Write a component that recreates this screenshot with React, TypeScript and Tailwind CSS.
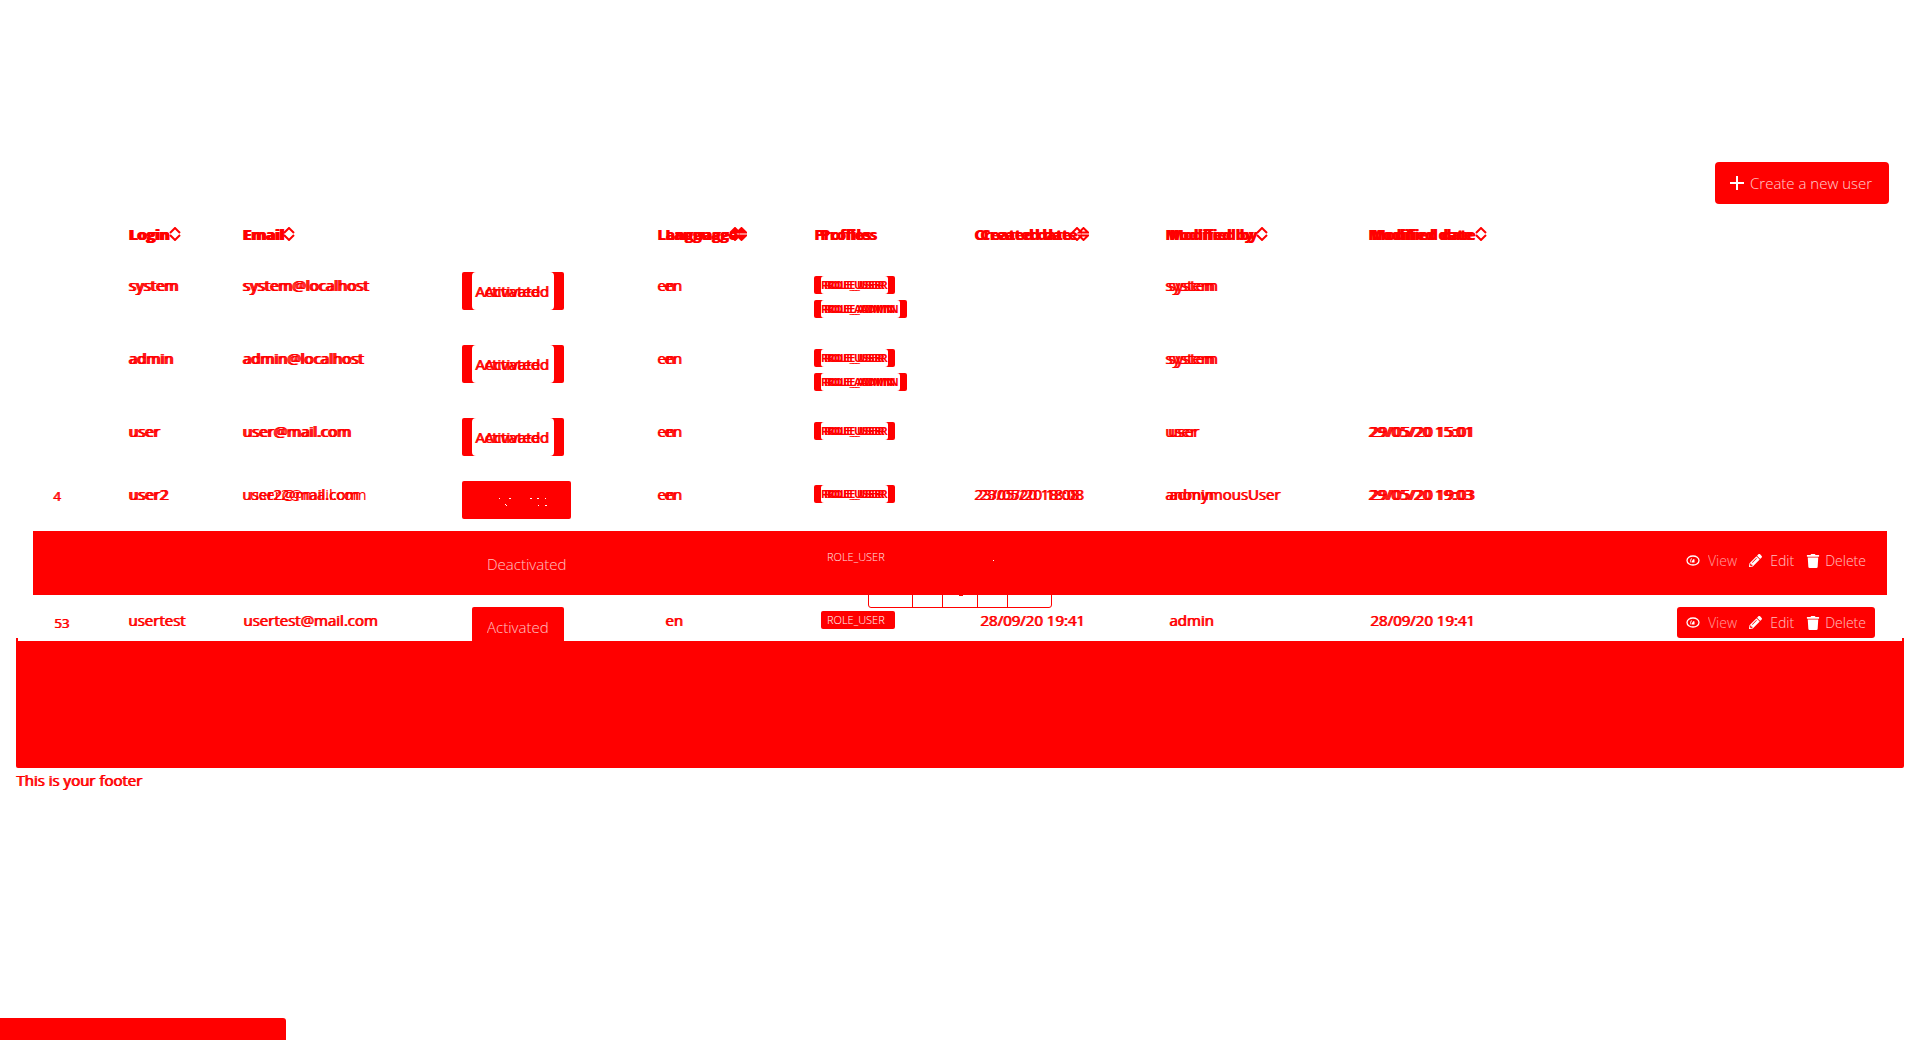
import React from "react";
import { FaPencilAlt, FaTrash } from "react-icons/fa";

type Row = {
  id?: string;
  login: string;
  email: string;
  status: "changed" | "solid";
  roles: string[];
  created?: string;
  by: [string, string];
  modified?: string;
  height: string;
};

const rows: Row[] = [
  { login: "system", email: "system@localhost", status: "changed", roles: ["ROLE_USER", "ROLE_ADMIN"], by: ["system", "system"], height: "h-[73px]" },
  { login: "admin", email: "admin@localhost", status: "changed", roles: ["ROLE_USER", "ROLE_ADMIN"], by: ["system", "system"], height: "h-[73px]" },
  { login: "user", email: "user@mail.com", status: "changed", roles: ["ROLE_USER"], by: ["user", "user"], modified: "29/05/20 15:01", height: "h-[63px]" },
  { id: "4", login: "user2", email: "user2@mail.com", status: "solid", roles: ["ROLE_USER"], created: "23/05/20 18:08", by: ["anonymousUser", "admin"], modified: "29/05/20 19:03", height: "h-[62px]" },
];

const columns = ["w-[83px]", "w-[114px]", "w-[220px]", "w-[195px]", "w-[157px]", "w-[160px]", "w-[191px]", "w-[203px]", "", "w-[222px]"];

function Overlap({ a, b }: { a: string; b: string }) {
  return (
    <span className="inline-grid whitespace-nowrap align-top [text-shadow:1px_0_0_red]">
      <span className="col-start-1 row-start-1">{a}</span>
      <span aria-hidden="true" className="col-start-1 row-start-1 pl-1">{b}</span>
    </span>
  );
}

function Sort({ filled = false, wide = false }: { filled?: boolean; wide?: boolean }) {
  return (
    <svg width={wide ? 18 : 12} height="14" viewBox={wide ? "0 0 18 14" : "0 0 12 14"} className="shrink-0" fill={filled ? "red" : "none"} stroke="red" strokeWidth="2">
      <path d="M1 6 6 1 11 6M1 8l5 5 5-5" />
      {wide && <path fill={filled ? "red" : "none"} d="M8 5.500 12.500 1l4.500 4.500zM8 8.500l4.500 4.500 4.500-4.500z" />}
    </svg>
  );
}

function Eye() {
  return (
    <svg width="14" height="11" viewBox="0 0 14 11" fill="none" stroke="white" strokeWidth="1.3">
      <ellipse cx="7" cy="5.500" rx="6" ry="4.500" />
      <path d="M6 7.500V6l1.500-2 1 .5v3z" fill="white" stroke="none" />
      <path d="M5 7.500Q4 5 5.500 3.500" strokeWidth="1" />
    </svg>
  );
}

function Heading({ text, shadow, sort }: { text: string; shadow: string; sort?: React.ReactNode }) {
  return (
    <th scope="col" className="px-3 pb-0 pt-4 text-left align-top font-bold">
      <span className="flex items-center whitespace-nowrap">
        <span className={shadow}>{text}</span>
        {sort}
      </span>
    </th>
  );
}

function Actions() {
  return (
    <div className="flex h-[31px] items-center rounded-[3px] bg-[#ff0000] text-[14px] font-light text-white">
      <button type="button" className="flex items-center gap-2 pl-[9px]"><Eye /><span className="opacity-60">View</span></button>
      <button type="button" className="ml-auto flex items-center gap-2"><FaPencilAlt size={13} /><span className="opacity-75">Edit</span></button>
      <button type="button" className="ml-auto flex items-center gap-[5px] pr-[9px]"><FaTrash size={14} /><span className="opacity-75">Delete</span></button>
    </div>
  );
}

function Role({ name }: { name: string }) {
  return (
    <span className={(name === "ROLE_USER" ? "w-[81px]" : "w-[93px]") + " flex h-[18px] rounded-[2px] bg-[#ff0000] px-[7px]"}>
      <span className="w-full overflow-hidden whitespace-nowrap rounded-[3px] bg-white text-[11px] font-bold leading-[18px] [text-shadow:3px_0_0_red,6px_0_0_red]">{name}</span>
    </span>
  );
}

function Status({ kind }: { kind: Row["status"] }) {
  if (kind === "solid") {
    return (
      <span className="block h-[38px] w-[109px] rounded-[2px] bg-[#ff0000]">
        <svg width="109" height="38" viewBox="0 0 109 38" fill="white">
          <path d="M37 17h1v1h-1zM47 17h2v1h-2zM68 17h2v1h-2zM75 17h2v1h-2zM83 17h1v1h-1zM43 23h1v1h1v1h-1v-1h-1zM76 24h1v1h-1zM83 24h2v1h-2z" />
        </svg>
      </span>
    );
  }
  return (
    <span className="block h-[38px] w-[102px] rounded-[2px] bg-[#ff0000] px-[10px]">
      <span className="block h-full rounded-[4px] bg-white pl-[3px] leading-[38px] [text-shadow:1px_0_0_red,9px_0_0_red,10px_0_0_red]">Activated</span>
    </span>
  );
}

export default function App() {
  return (
    <div className="relative flex min-h-screen flex-col bg-white font-['Open_Sans',sans-serif] text-[15px] leading-5 text-[#ff0000]">
      <main className="px-4 pt-[162px]">
        <div className="flex justify-end pr-[15px]">
          <button type="button" className="flex h-[42px] w-[174px] items-center gap-[6px] whitespace-nowrap rounded-[4px] bg-[#ff0000] pl-[15px] font-light text-white">
            <svg width="14" height="14" viewBox="0 0 14 14" fill="white"><path d="M6 0h2v6h6v2H8v6H6V8H0V6h6z" /></svg>
            <span className="opacity-80">Create a new user</span>
          </button>
        </div>
        <div className="relative px-[17px] pt-1">
          <table className="w-full table-fixed border-collapse">
            <colgroup>{columns.map((c, i) => <col key={i} className={c} />)}</colgroup>
            <thead>
              <tr className="h-[52px]">
                <td />
                <Heading text="Login" shadow="[text-shadow:1px_0_0_red,2px_0_0_red]" sort={<Sort />} />
                <Heading text="Email" shadow="[text-shadow:1px_0_0_red,2px_0_0_red]" sort={<Sort />} />
                <td />
                <Heading text="Language" shadow="[text-shadow:1px_0_0_red,8px_0_0_red,9px_0_0_red]" sort={<Sort filled wide />} />
                <Heading text="Profiles" shadow="[text-shadow:1px_0_0_red,6px_0_0_red,7px_0_0_red]" />
                <Heading text="Created date" shadow="[text-shadow:1px_0_0_red,6px_0_0_red,7px_0_0_red]" sort={<Sort wide />} />
                <Heading text="Modified by" shadow="pr-[3px] [text-shadow:1px_0_0_red,4px_0_0_red,5px_0_0_red]" sort={<Sort />} />
                <Heading text="Modified date" shadow="pr-[3px] [text-shadow:1px_0_0_red,3px_0_0_red,4px_0_0_red]" sort={<Sort />} />
                <td />
              </tr>
            </thead>
            <tbody className="[&_td]:px-3 [&_td]:pb-0 [&_td]:pt-[15px] [&_td]:align-top">
              {rows.map((r) => (
                <tr key={r.login} className={r.height}>
                  <td className="text-[13px]"><span className="block pl-[9px] pt-[2px] [text-shadow:-1px_0_0_red]">{r.id}</span></td>
                  <td><span className="[text-shadow:1px_0_0_red,2px_0_0_red]">{r.login}</span></td>
                  <td><span className={r.status === "solid" ? "[text-shadow:1px_0_0_red,8px_0_0_red]" : "[text-shadow:1px_0_0_red,2px_0_0_red]"}>{r.email}</span></td>
                  <td><div className="-mt-[3px]"><Status kind={r.status} /></div></td>
                  <td><span className="[text-shadow:1px_0_0_red,7px_0_0_red,8px_0_0_red]">en</span></td>
                  <td><div className="flex flex-col gap-[6px] pt-px">{r.roles.map((x) => <Role key={x} name={x} />)}</div></td>
                  <td><span className="[text-shadow:1px_0_0_red,5px_0_0_red,6px_0_0_red]">{r.created}</span></td>
                  <td>{r.by[0] === r.by[1] ? <span className="[text-shadow:1px_0_0_red,3px_0_0_red,4px_0_0_red]">{r.by[0]}</span> : <Overlap a={r.by[0]} b={r.by[1]} />}</td>
                  <td><span className="[text-shadow:1px_0_0_red,2px_0_0_red,3px_0_0_red]">{r.modified}</span></td>
                  <td />
                </tr>
              ))}
              <tr className="h-16 bg-[#ff0000] text-white">
                <td /><td /><td />
                <td><span className="block pl-[25px] pt-2 font-light opacity-75">Deactivated</span></td>
                <td />
                <td><span className="block pl-[13px] pt-px text-[11px] font-light leading-[20px] opacity-90">ROLE_USER</span></td>
                <td><span className="ml-[19px] mt-[14px] block h-px w-px bg-white" /></td>
                <td /><td />
                <td><div className="-mt-px"><Actions /></div></td>
              </tr>
              <tr className="h-[46px] [text-shadow:1px_0_0_red]">
                <td className="text-[13px]"><span className="block pl-[9px] pt-[3px]">53</span></td>
                <td>usertest</td>
                <td><span className="pl-px">usertest@mail.com</span></td>
                <td><div className="-mb-5 -mt-[3px] ml-[10px] h-[34px] w-[92px] rounded-t-[2px] bg-[#ff0000] pl-[15px] pt-[10px] font-light text-white"><span className="opacity-75">Activated</span></div></td>
                <td><span className="pl-2">en</span></td>
                <td><span className="ml-[7px] mt-px block h-[18px] w-[74px] rounded-[2px] bg-[#ff0000] pl-[6px] text-[11px] font-light leading-[18px] text-white">ROLE_USER</span></td>
                <td><span className="pl-[6px]">28/09/20 19:41</span></td>
                <td><span className="pl-1">admin</span></td>
                <td><span className="pl-[2px]">28/09/20 19:41</span></td>
                <td><div className="-mt-[3px]"><Actions /></div></td>
              </tr>
            </tbody>
          </table>
          <svg className="absolute bottom-[33px] left-1/2 -translate-x-1/2" width="184" height="13" viewBox="0 0 184 13" fill="none" stroke="red">
            <path d="M.5 0v10q0 2.500 2.500 2.500h178q2.500 0 2.500-2.500V0M44.500 0v12M74.500 0v12M109.500 0v12M139.500 0v12M91 .5h4" />
          </svg>
        </div>
        <div className="relative h-[127px] rounded-b-[2px] bg-[#ff0000]">
          <span className="absolute -top-[3px] left-0 h-[3px] w-[2px] bg-[#ff0000]" />
          <span className="absolute -top-[3px] right-0 h-[3px] w-[2px] bg-[#ff0000]" />
        </div>
      </main>
      <footer className="px-4 pt-[2px] [text-shadow:1px_0_0_red]">This is your footer</footer>
      <div className="absolute bottom-0 left-0 h-[22px] w-[286px] rounded-tr-[3px] bg-[#ff0000]" />
    </div>
  );
}
